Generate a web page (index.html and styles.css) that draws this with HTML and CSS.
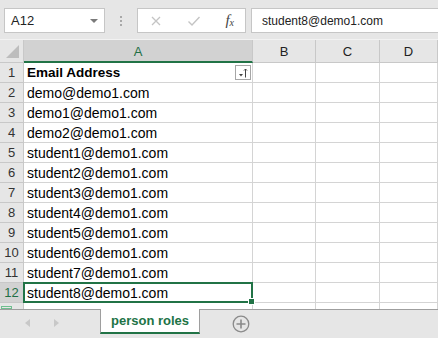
FILE: index.html
```html
<!DOCTYPE html>
<html lang="en">
<head>
    <meta charset="UTF-8">
    <title>person roles</title>
    <link rel="stylesheet" href="styles.css">
</head>
<body>
    <div class="app">
        <!-- formula bar -->
        <div class="formula-bar">
            <div class="name-box">
                <span>A12</span>
                <span class="caret"></span>
            </div>
            <div class="grip"><i></i><i></i><i></i></div>
            <div class="fx-box">
                <svg width="12" height="12" viewBox="0 0 12 12"><path d="M2 2 L10 10 M10 2 L2 10" stroke="#c4c4c4" stroke-width="1.3" fill="none"/></svg>
                <svg width="14" height="12" viewBox="0 0 14 12"><path d="M1.5 6.5 L5 10 L12.5 2" stroke="#c4c4c4" stroke-width="1.4" fill="none"/></svg>
                <span class="fx"><i>f</i><sub>x</sub></span>
            </div>
            <div class="formula-input">student8@demo1.com</div>
        </div>

        <!-- sheet grid -->
        <div class="sheet">
            <div class="corner"><span class="tri"></span></div>
            <div class="col-head active">A</div>
            <div class="col-head">B</div>
            <div class="col-head">C</div>
            <div class="col-head">D</div>

            <div class="row-head">1</div>
            <div class="cell bold">Email Address<span class="filter-btn"><svg width="12" height="12" viewBox="0 0 12 12"><path d="M2 7 L6 7 L4 9.5 Z" fill="#444"/><path d="M8.5 10.5 V2 M7 3.5 L8.5 2 L10 3.5" stroke="#444" stroke-width="1" fill="none"/></svg></span></div>
            <div class="cell"></div><div class="cell"></div><div class="cell"></div>

            <div class="row-head">2</div>
            <div class="cell">demo@demo1.com</div>
            <div class="cell"></div><div class="cell"></div><div class="cell"></div>

            <div class="row-head">3</div>
            <div class="cell">demo1@demo1.com</div>
            <div class="cell"></div><div class="cell"></div><div class="cell"></div>

            <div class="row-head">4</div>
            <div class="cell">demo2@demo1.com</div>
            <div class="cell"></div><div class="cell"></div><div class="cell"></div>

            <div class="row-head">5</div>
            <div class="cell">student1@demo1.com</div>
            <div class="cell"></div><div class="cell"></div><div class="cell"></div>

            <div class="row-head">6</div>
            <div class="cell">student2@demo1.com</div>
            <div class="cell"></div><div class="cell"></div><div class="cell"></div>

            <div class="row-head">7</div>
            <div class="cell">student3@demo1.com</div>
            <div class="cell"></div><div class="cell"></div><div class="cell"></div>

            <div class="row-head">8</div>
            <div class="cell">student4@demo1.com</div>
            <div class="cell"></div><div class="cell"></div><div class="cell"></div>

            <div class="row-head">9</div>
            <div class="cell">student5@demo1.com</div>
            <div class="cell"></div><div class="cell"></div><div class="cell"></div>

            <div class="row-head">10</div>
            <div class="cell">student6@demo1.com</div>
            <div class="cell"></div><div class="cell"></div><div class="cell"></div>

            <div class="row-head">11</div>
            <div class="cell">student7@demo1.com</div>
            <div class="cell"></div><div class="cell"></div><div class="cell"></div>

            <div class="row-head active">12</div>
            <div class="cell selected">student8@demo1.com<span class="handle"></span></div>
            <div class="cell"></div><div class="cell"></div><div class="cell"></div>

            <div class="row-head partial"><span class="split"></span></div>
            <div class="cell partial"></div><div class="cell partial"></div><div class="cell partial"></div><div class="cell partial"></div>
        </div>

        <!-- sheet tabs -->
        <div class="tab-bar">
            <div class="nav">
                <svg width="6" height="8" viewBox="0 0 6 8"><path d="M5 0 L0 4 L5 8 Z" fill="#c8c8c8"/></svg>
                <svg width="6" height="8" viewBox="0 0 6 8"><path d="M1 0 L6 4 L1 8 Z" fill="#c8c8c8"/></svg>
            </div>
            <div class="tab">person roles</div>
            <div class="add-sheet">
                <svg width="18" height="18" viewBox="0 0 18 18"><circle cx="9" cy="9" r="7.8" stroke="#8a8a8a" stroke-width="1.3" fill="none"/><path d="M9 4.5 V13.5 M4.5 9 H13.5" stroke="#8a8a8a" stroke-width="1.6"/></svg>
            </div>
        </div>
    </div>
</body>
</html>
```

FILE: styles.css
```css
body {
    margin: 0;
    padding: 0;
    background: #ffffff;
    font-family: 'Liberation Sans', Arial, sans-serif;
    overflow: hidden;
}

.app {
    width: 438px;
    height: 338px;
    display: flex;
    flex-direction: column;
    overflow: hidden;
}

/* formula bar */
.formula-bar {
    height: 40px;
    box-sizing: border-box;
    background: #e6e6e6;
    display: flex;
    align-items: flex-start;
    padding: 8px 0 0 4px;
    border-bottom: 1px solid #f2f2f2;
}

.name-box {
    width: 101px;
    height: 25px;
    box-sizing: border-box;
    background: #fff;
    border: 1px solid #c6c6c6;
    display: flex;
    align-items: center;
    justify-content: space-between;
    padding: 0 6px 0 6px;
    font-size: 13px;
    color: #222;
}

.caret {
    width: 0;
    height: 0;
    border-left: 4px solid transparent;
    border-right: 4px solid transparent;
    border-top: 4px solid #7a7a7a;
}

.grip {
    width: 32px;
    height: 25px;
    display: flex;
    flex-direction: column;
    align-items: center;
    justify-content: center;
    gap: 2px;
}

.grip i {
    width: 2px;
    height: 2px;
    background: #a8a8a8;
}

.fx-box {
    width: 109px;
    height: 25px;
    box-sizing: border-box;
    background: #fff;
    border: 1px solid #c6c6c6;
    display: flex;
    align-items: center;
    justify-content: space-between;
    padding: 0 11px 0 12px;
}

.fx {
    font-family: 'Liberation Serif', serif;
    font-size: 15px;
    color: #444;
}

.fx sub {
    font-size: 10px;
    font-style: italic;
    vertical-align: -1px;
}

.formula-input {
    flex: 1;
    margin-left: 5px;
    height: 25px;
    box-sizing: border-box;
    background: #fff;
    border: 1px solid #c6c6c6;
    border-right: none;
    display: flex;
    align-items: center;
    padding-left: 10px;
    font-size: 12px;
    color: #222;
}

/* sheet */
.sheet {
    display: grid;
    grid-template-columns: 24px 229px 63px 64px 1fr;
    grid-template-rows: 23px repeat(12, 20px) 6px;
    font-size: 14px;
    color: #000;
}

.corner {
    background: #e6e6e6;
    border-right: 1px solid #c8c8c8;
    border-bottom: 1px solid #c8c8c8;
    box-sizing: border-box;
    position: relative;
}

.tri {
    position: absolute;
    right: 4px;
    bottom: 4px;
    width: 0;
    height: 0;
    border-left: 13px solid transparent;
    border-bottom: 13px solid #bdbdbd;
}

.col-head {
    background: #e6e6e6;
    border-right: 1px solid #c8c8c8;
    border-bottom: 1px solid #c8c8c8;
    box-sizing: border-box;
    display: flex;
    align-items: center;
    justify-content: center;
    padding-top: 1px;
    font-size: 13px;
    color: #222;
}

.col-head.active {
    background: #d2d2d2;
    border-bottom: 2px solid #217346;
    color: #1f6f45;
}

.row-head {
    background: #e6e6e6;
    border-right: 1px solid #c8c8c8;
    border-bottom: 1px solid #c8c8c8;
    box-sizing: border-box;
    display: flex;
    align-items: center;
    justify-content: center;
    font-size: 13px;
    color: #333;
    position: relative;
}

.row-head.active {
    background: #d2d2d2;
    color: #1f6f45;
}

.cell {
    border-right: 1px solid #d4d4d4;
    border-bottom: 1px solid #d4d4d4;
    box-sizing: border-box;
    display: flex;
    align-items: center;
    padding-left: 3px;
    white-space: nowrap;
    position: relative;
}

.cell.bold {
    font-weight: bold;
    font-size: 13.5px;
}

.partial {
    border-bottom: none;
}

.split {
    position: absolute;
    left: 1px;
    top: 3px;
    width: 11px;
    height: 3px;
    box-sizing: border-box;
    border: 1px solid #6fbf8f;
}

.filter-btn {
    position: absolute;
    right: 1px;
    top: 2px;
    width: 16px;
    height: 15px;
    box-sizing: border-box;
    border: 1px solid #a6a6a6;
    background: #fff;
    display: flex;
    align-items: center;
    justify-content: center;
}

.selected::after {
    content: '';
    position: absolute;
    left: -1px;
    top: -1px;
    right: -1px;
    bottom: -1px;
    border: 2px solid #217346;
}

.handle {
    position: absolute;
    right: -3px;
    bottom: -3px;
    width: 5px;
    height: 5px;
    background: #217346;
    border: 1px solid #fff;
    z-index: 2;
}

/* tabs */
.tab-bar {
    flex: 1;
    background: #e6e6e6;
    border-top: 1px solid #9e9e9e;
    display: flex;
    align-items: flex-start;
}

.nav {
    width: 100px;
    height: 26px;
    display: flex;
    align-items: center;
    gap: 22px;
    padding-left: 25px;
    box-sizing: border-box;
}

.tab {
    width: 98px;
    height: 23px;
    margin-top: -1px;
    background: #fff;
    border-left: 1px solid #9e9e9e;
    border-right: 1px solid #9e9e9e;
    border-bottom: 2px solid #217346;
    box-sizing: content-box;
    color: #217346;
    font-weight: bold;
    font-size: 13px;
    display: flex;
    align-items: center;
    justify-content: center;
}

.add-sheet {
    margin-left: 32px;
    margin-top: 5px;
    display: flex;
}
```
